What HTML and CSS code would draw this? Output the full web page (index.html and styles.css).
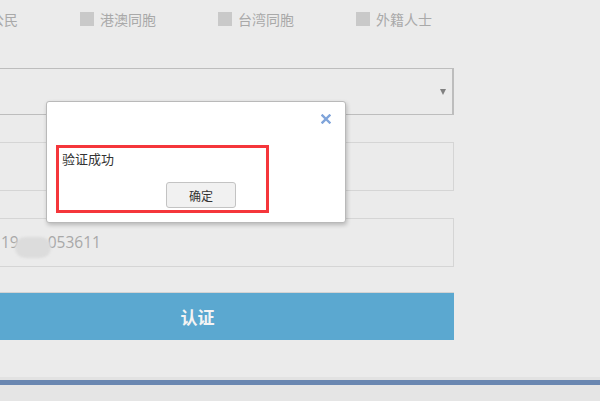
FILE: index.html
```html
<!DOCTYPE html>
<html lang="zh-CN">
<head>
<meta charset="utf-8">
<title>认证</title>
<link rel="stylesheet" href="styles.css">
</head>
<body>
<div class="page">
  <div class="form">
    <div class="opts">
      <label class="opt"><span class="box"></span><span>中国公民</span></label>
      <label class="opt"><span class="box"></span><span>港澳同胞</span></label>
      <label class="opt"><span class="box"></span><span>台湾同胞</span></label>
      <label class="opt"><span class="box"></span><span>外籍人士</span></label>
    </div>
    <div class="select"><span class="arrow"></span></div>
    <div class="field"></div>
    <div class="field phone"><span>19</span><span class="blur"></span><span>053611</span></div>
    <div class="submit">认证</div>
  </div>
  <div class="footer"></div>
</div>

<div class="dialog">
  <div class="dialog-head">
    <span class="close"><svg width="10" height="10" viewBox="0 0 10 10"><path d="M1.5 1.5L8.5 8.5M8.5 1.5L1.5 8.5" stroke="#7fa4da" stroke-width="2.4" stroke-linecap="square"/></svg></span>
  </div>
  <div class="mark">
    <div class="msg">验证成功</div>
    <div class="ok">确定</div>
  </div>
</div>
</body>
</html>
```
FILE: styles.css
```css
html, body {
  margin: 0;
  padding: 0;
}
body {
  background: #ebebeb;
  font-family: "Noto Sans CJK SC", "Liberation Sans", sans-serif;
  height: 401px;
  overflow: hidden;
}
.page {
  display: flex;
  flex-direction: column;
  height: 401px;
}
.form {
  margin-left: -59px;
  width: 513px;
}
.opts {
  display: flex;
  align-items: center;
  gap: 62px;
  height: 38px;
  padding-left: 1px;
}
.opt {
  display: flex;
  align-items: center;
  gap: 6px;
  font-size: 14px;
  line-height: 20px;
  color: #a9a9a9;
}
.box {
  width: 14px;
  height: 14px;
  background: #c9c9c9;
}
.select {
  box-sizing: border-box;
  margin-top: 30px;
  height: 47px;
  border: 1px solid #bdbdbd;
  border-right-width: 2px;
  display: flex;
  align-items: center;
  justify-content: flex-end;
  padding-right: 6px;
}
.arrow {
  width: 0;
  height: 0;
  border-left: 3.5px solid transparent;
  border-right: 3.5px solid transparent;
  border-top: 6px solid #808080;
  margin-top: 1px;
}
.field {
  box-sizing: border-box;
  margin-top: 27px;
  height: 49px;
  border: 1px solid #d5d5d5;
}
.phone {
  display: flex;
  align-items: center;
  padding-left: 59px;
  font-family: "Open Sans", "Noto Sans CJK SC", sans-serif;
  font-size: 15.5px;
  color: #a8a8a8;
  line-height: 20px;
  padding-bottom: 2px;
}
.blur {
  display: inline-block;
  width: 36px;
  height: 21px;
  margin-left: -4px;
  margin-right: -3px;
  margin-top: 11px;
  background: #dcdcdc;
  border-radius: 11px;
  filter: blur(1.2px);
}
.submit {
  box-sizing: border-box;
  margin-top: 25px;
  height: 48px;
  border-top: 1px solid #d3d3d3;
  background: #5ba8d0;
  color: #f4f4f4;
  font-weight: bold;
  font-size: 17px;
  display: flex;
  align-items: center;
  justify-content: center;
}
.footer {
  margin-top: auto;
  height: 24px;
  box-sizing: border-box;
  border-top: 3px solid #e2e2e2;
  background: #e5e5e5;
}
.footer::before {
  content: "";
  display: block;
  height: 5px;
  background: #6a87b1;
}
.dialog {
  position: absolute;
  left: 46px;
  top: 101px;
  width: 300px;
  height: 122px;
  box-sizing: border-box;
  background: #fff;
  border: 1px solid #b9b9b9;
  border-radius: 3px;
  box-shadow: 1px 2px 4px rgba(0, 0, 0, 0.22);
  padding: 0 9px;
}
.dialog-head {
  height: 43px;
  display: flex;
  justify-content: flex-end;
  align-items: flex-start;
}
.close {
  display: block;
  width: 10px;
  height: 10px;
  margin-top: 12px;
  margin-right: 5px;
}
.close svg {
  display: block;
}
.mark {
  box-sizing: border-box;
  width: 213px;
  height: 68px;
  border: 3px solid #f5363b;
  padding: 2px 3px 0;
  display: flex;
  flex-direction: column;
}
.msg {
  font-size: 13px;
  line-height: 17px;
  color: #333;
}
.ok {
  box-sizing: border-box;
  width: 70px;
  height: 26px;
  margin-top: 15px;
  margin-left: 104px;
  border: 1px solid #c3c3c3;
  border-radius: 3px;
  background: #f1f1f1;
  font-size: 12px;
  color: #333;
  display: flex;
  align-items: center;
  justify-content: center;
}
```
